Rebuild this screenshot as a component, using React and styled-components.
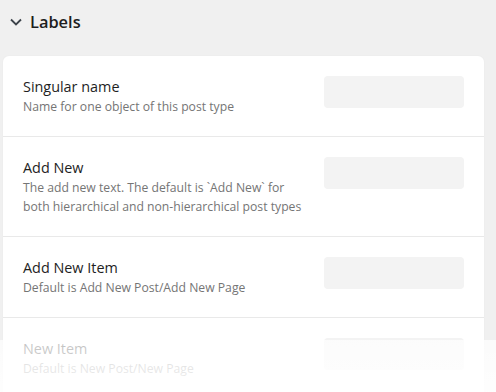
import React from "react";
import styled, { createGlobalStyle } from "styled-components";

const Global = createGlobalStyle`
  html, body { margin: 0; padding: 0; background: #f0f0f0; }
  body { font-family: "Open Sans", "Noto Sans", sans-serif; overflow: hidden; }
  * { box-sizing: border-box; }
`;

const Page = styled.div`
  position: relative;
  width: 496px;
  height: 392px;
  overflow: hidden;
  padding: 0 12px 0 3px;
`;

const Header = styled.div`
  display: flex;
  align-items: center;
  gap: 8px;
  height: 44px;
  padding: 0 0 0 7px;
  margin-bottom: 12px;
`;

const Title = styled.h2`
  margin: 0;
  font-size: 16.4px;
  font-weight: 600;
  color: #1e1e1e;
  line-height: 1;
`;

const Card = styled.div`
  background: #fff;
  border-radius: 6px;
  box-shadow: 0 0 2px rgba(0, 0, 0, 0.04);
`;

const Row = styled.div`
  display: flex;
  align-items: flex-start;
  gap: 20px;
  padding: 20px;
  border-bottom: 1px solid #e9e9e9;
  &:last-child { border-bottom: none; }
`;

const Text = styled.div`
  flex: 1;
  min-width: 0;
`;

const Name = styled.div`
  font-size: 14.4px;
  line-height: 21px;
  color: #1e1e1e;
`;

const Desc = styled.div`
  font-size: 12.2px;
  line-height: 19px;
  color: #757575;
`;

const Input = styled.div`
  width: 140px;
  height: 32px;
  flex: none;
  background: #f3f3f3;
  border-radius: 4px;
`;

const Fade = styled.div`
  position: absolute;
  left: 0;
  right: 0;
  bottom: 0;
  height: 52px;
  background: linear-gradient(rgba(255,255,255,0.72), rgba(255,255,255,0.9));
`;

const Chevron = () => (
  <svg width="12" height="8" viewBox="0 0 12 8" fill="none">
    <path d="M1 1.5l5 5 5-5" stroke="#3c434a" strokeWidth="1.8" />
  </svg>
);

const rows = [
  ["Singular name", "Name for one object of this post type"],
  ["Add New", "The add new text. The default is `Add New` for both hierarchical and non-hierarchical post types"],
  ["Add New Item", "Default is Add New Post/Add New Page"],
  ["New Item", "Default is New Post/New Page"],
];

export default function App() {
  return (
    <Page>
      <Global />
      <Header>
        <Chevron />
        <Title>Labels</Title>
      </Header>
      <Card>
        {rows.map(([n, d]) => (
          <Row key={n}>
            <Text>
              <Name>{n}</Name>
              <Desc>{d}</Desc>
            </Text>
            <Input />
          </Row>
        ))}
      </Card>
      <Fade />
    </Page>
  );
}
